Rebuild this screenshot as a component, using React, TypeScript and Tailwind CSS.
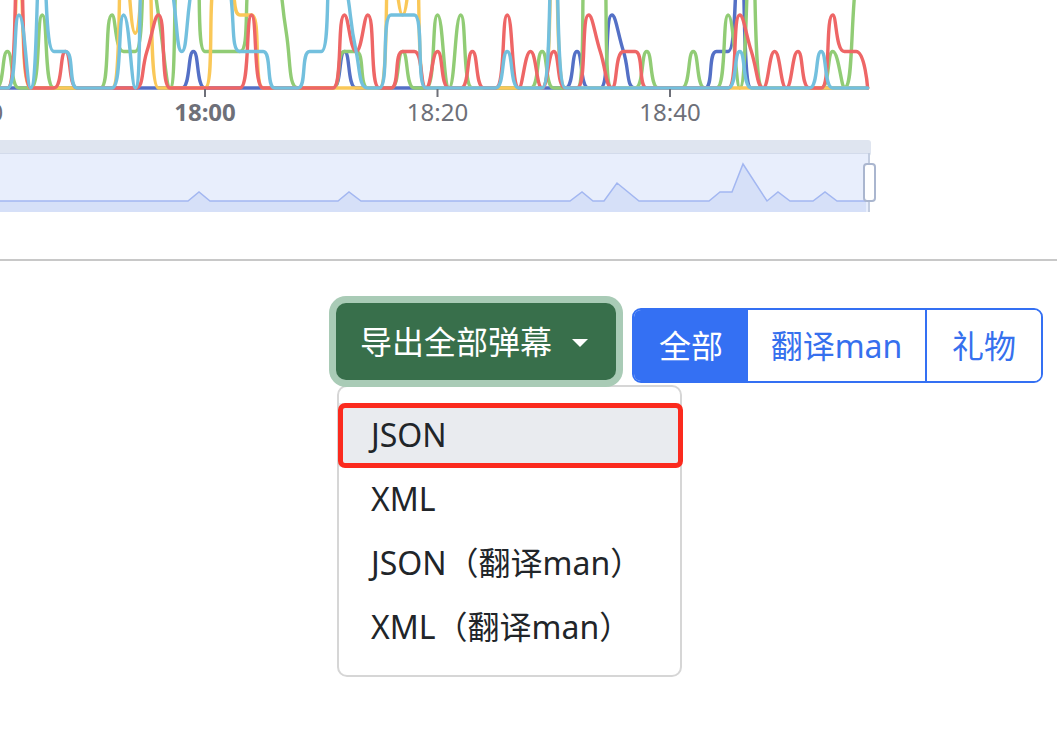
import React from "react";

// time axis: 20 minutes = 232.5px, 18:00 sits at x=205
const STEP = 232.5 / 20;
const X0 = 205 - 232.5;
const BASE = 88;
const UNIT = 36.5;
const COUNT = 78;

type Pt = [number, number];

const series: { name: string; color: string; values: Record<number, number> }[] = [
  { name: "blue", color: "#5470c6", values: { 19: 1, 32: 1, 52: 1, 55: 2, 56: 1, 64: 1, 65: 1, 66: 5 } },
  {
    name: "green",
    color: "#91cc75",
    values: {
      3: 1, 6: 2, 12: 2, 13: 1, 14: 1, 15: 4, 16: 2, 18: 4, 19: 4, 20: 1, 21: 1, 22: 1, 23: 1,
      24: 4, 25: 5, 26: 4, 27: 1.5, 32: 1, 33: 1, 37: 1, 40: 2, 42: 2, 49: 1, 53: 4, 54: 4,
      58: 1, 62: 1, 65: 2, 67: 4, 74: 1, 76: 3, 77: 6,
    },
  },
  {
    name: "yellow",
    color: "#fac858",
    values: { 4: 3, 13: 4, 14: 1.5, 15: 4, 21: 3, 22: 3, 23: 2, 24: 2, 36: 4, 37: 2, 38: 4, 50: 4 },
  },
  {
    name: "red",
    color: "#ee6666",
    values: {
      4: 4, 8: 1, 15: 1, 16: 2, 24: 2, 32: 2, 33: 1, 34: 2, 37: 1, 38: 1, 40: 1, 43: 1, 46: 2,
      48: 1, 50: 1, 53: 2, 54: 1, 56: 1, 57: 1, 66: 2, 67: 1, 69: 1, 71: 1, 74: 2, 75: 1, 76: 1,
    },
  },
  {
    name: "lightblue",
    color: "#73c0de",
    values: {
      4: 2, 6: 4, 7: 1, 8: 1, 13: 2, 15: 4, 16: 4, 17: 3, 18: 1, 19: 3, 20: 4, 21: 4, 22: 3,
      23: 1, 24: 1, 25: 1, 29: 1, 30: 1, 31: 4, 32: 3, 33: 1, 36: 2, 37: 2, 38: 2, 46: 1,
      50: 5, 66: 1, 73: 1,
    },
  },
];

const overview: Pt[] = [
  [-10, 201], [188, 201], [199, 192], [210, 201], [338, 201], [349, 192], [361, 201],
  [570, 201], [582, 192], [593, 201], [604, 201], [617, 183], [639, 201], [709, 201],
  [720, 192], [732, 192], [743, 164], [767, 201], [778, 192], [790, 201], [813, 201],
  [825, 192], [837, 201], [866, 201],
];

const ticks = [
  { x: X0, label: "17:40", bold: false },
  { x: 205, label: "18:00", bold: true },
  { x: 437.5, label: "18:20", bold: false },
  { x: 670, label: "18:40", bold: false },
];

const f = (n: number) => n.toFixed(2);

function toPoints(values: Record<number, number>): Pt[] {
  const pts: Pt[] = [];
  for (let i = 0; i < COUNT; i++) pts.push([X0 + i * STEP, BASE - (values[i] ?? 0) * UNIT]);
  return pts;
}

// same control point rule as echarts' smooth line (no overshoot)
function smoothPath(pts: Pt[], smooth = 0.5) {
  let [px, py] = pts[0];
  let cpx0 = px;
  let cpy0 = py;
  let d = `M${f(px)} ${f(py)}`;
  for (let i = 1; i < pts.length; i++) {
    const [x, y] = pts[i];
    let cpx1 = x;
    let cpy1 = y;
    let ncx = x;
    let ncy = y;
    if (i < pts.length - 1) {
      const [nx, ny] = pts[i + 1];
      let vx = nx - px;
      let vy = ny - py;
      const lp = Math.hypot(x - px, y - py);
      const ln = Math.hypot(nx - x, ny - y);
      const r = ln / (ln + lp);
      ncx = x + vx * smooth * r;
      ncy = y + vy * smooth * r;
      ncx = Math.max(Math.min(ncx, Math.max(nx, x)), Math.min(nx, x));
      ncy = Math.max(Math.min(ncy, Math.max(ny, y)), Math.min(ny, y));
      vx = ncx - x;
      vy = ncy - y;
      cpx1 = x - (vx * lp) / ln;
      cpy1 = y - (vy * lp) / ln;
      cpx1 = Math.max(Math.min(cpx1, Math.max(px, x)), Math.min(px, x));
      cpy1 = Math.max(Math.min(cpy1, Math.max(py, y)), Math.min(py, y));
      vx = x - cpx1;
      vy = y - cpy1;
      ncx = x + (vx * ln) / lp;
      ncy = y + (vy * ln) / lp;
    }
    d += ` C${f(cpx0)} ${f(cpy0)} ${f(cpx1)} ${f(cpy1)} ${f(x)} ${f(y)}`;
    cpx0 = ncx;
    cpy0 = ncy;
    px = x;
    py = y;
  }
  return d;
}

const ChartPanel = () => {
  const linePts = overview.map(([x, y]) => `${x},${y}`).join(" ");
  return (
    <svg width={1057} height={230} className="block" fontFamily="'Noto Sans', 'Liberation Sans', sans-serif">
      {/* axis */}
      <line x1={0} y1={BASE} x2={866} y2={BASE} stroke="#6e7079" strokeWidth={2} />

      {series.map((s) => (
        <path
          key={s.name}
          d={smoothPath(toPoints(s.values))}
          fill="none"
          stroke={s.color}
          strokeWidth={3.4}
          strokeLinejoin="round"
          strokeLinecap="round"
        />
      ))}

      {ticks.map((t) => (
        <g key={t.label}>
          <line x1={t.x} y1={89} x2={t.x} y2={97} stroke="#6e7079" strokeWidth={2} />
          <text
            x={t.x}
            y={121}
            textAnchor="middle"
            fontSize={24}
            fontWeight={t.bold ? 700 : 400}
            fill="#6e7079"
          >
            {t.label}
          </text>
        </g>
      ))}

      {/* data zoom slider */}
      <rect x={-10} y={140} width={881} height={16} rx={3} fill="#dfe5f0" />
      <rect x={-10} y={153} width={879} height={59} fill="#e8eefc" />
      <line x1={-10} y1={153.5} x2={869} y2={153.5} stroke="#d3dbeb" strokeWidth={1} />
      <polygon points={`-10,212 ${linePts} 866,212`} fill="#d6e0f8" />
      <polyline points={linePts} fill="none" stroke="#a3b7f1" strokeWidth={1.5} />
      <line x1={869} y1={153} x2={869} y2={212} stroke="#c3cde0" strokeWidth={2} />
      <rect x={864} y={164} width={11} height={37} rx={3} fill="#ffffff" stroke="#aab6cf" strokeWidth={2} />
    </svg>
  );
};

const formats = ["JSON", "XML", "JSON（翻译man）", "XML（翻译man）"];
const tabs = [
  { label: "全部", width: "w-[114px]", active: true },
  { label: "翻译man", width: "w-[179px] border-r-2 border-[#3470f3]", active: false },
  { label: "礼物", width: "w-[114px]", active: false },
];

const ExportToolbar = () => {
  return (
    <div className="flex items-start justify-end gap-4 pr-[14px] pt-[42px]">
      <div className="relative w-[280px]">
        <button className="relative z-10 flex h-[77px] w-[280px] items-center rounded-[10px] bg-[#386f4b] pl-6 text-[32px] leading-[48px] text-white shadow-[0_0_0_7px_#a9cbb6]">
          <span>导出全部弹幕</span>
          <span className="ml-5 mt-[2px] h-0 w-0 border-x-[8px] border-t-[8px] border-x-transparent border-t-white" />
        </button>

        <div className="absolute left-[1px] top-[82px] w-[345px] rounded-[10px] border-2 border-[#d6d6d6] bg-white py-4">
          {formats.map((label, i) => (
            <div
              key={label}
              className={`relative flex h-16 items-center px-8 text-[32px] leading-[48px] text-[#212529] ${
                i === 0 ? "bg-[#e9ebef]" : ""
              }`}
            >
              {label}
              {i === 0 && (
                <span className="absolute -bottom-[1px] -left-[1px] -right-[3px] top-0 rounded-[7px] border-[5px] border-[#fb2a1e]" />
              )}
            </div>
          ))}
        </div>
      </div>

      <div className="mt-[5px] flex h-[75px] overflow-hidden rounded-[9px] border-2 border-[#3470f3]">
        {tabs.map((t) => (
          <div
            key={t.label}
            className={`flex h-full items-center justify-center text-[32px] leading-[48px] ${t.width} ${
              t.active ? "bg-[#3470f3] text-white" : "bg-white text-[#3670ee]"
            }`}
          >
            {t.label}
          </div>
        ))}
      </div>
    </div>
  );
};

export default function App() {
  return (
    <div className="min-h-screen bg-white font-['Noto_Sans','Noto_Sans_CJK_SC',sans-serif] text-[#212529]">
      <ChartPanel />
      <div className="mt-[29px] h-[2px] bg-[#c8c8c8]" />
      <ExportToolbar />
    </div>
  );
}
